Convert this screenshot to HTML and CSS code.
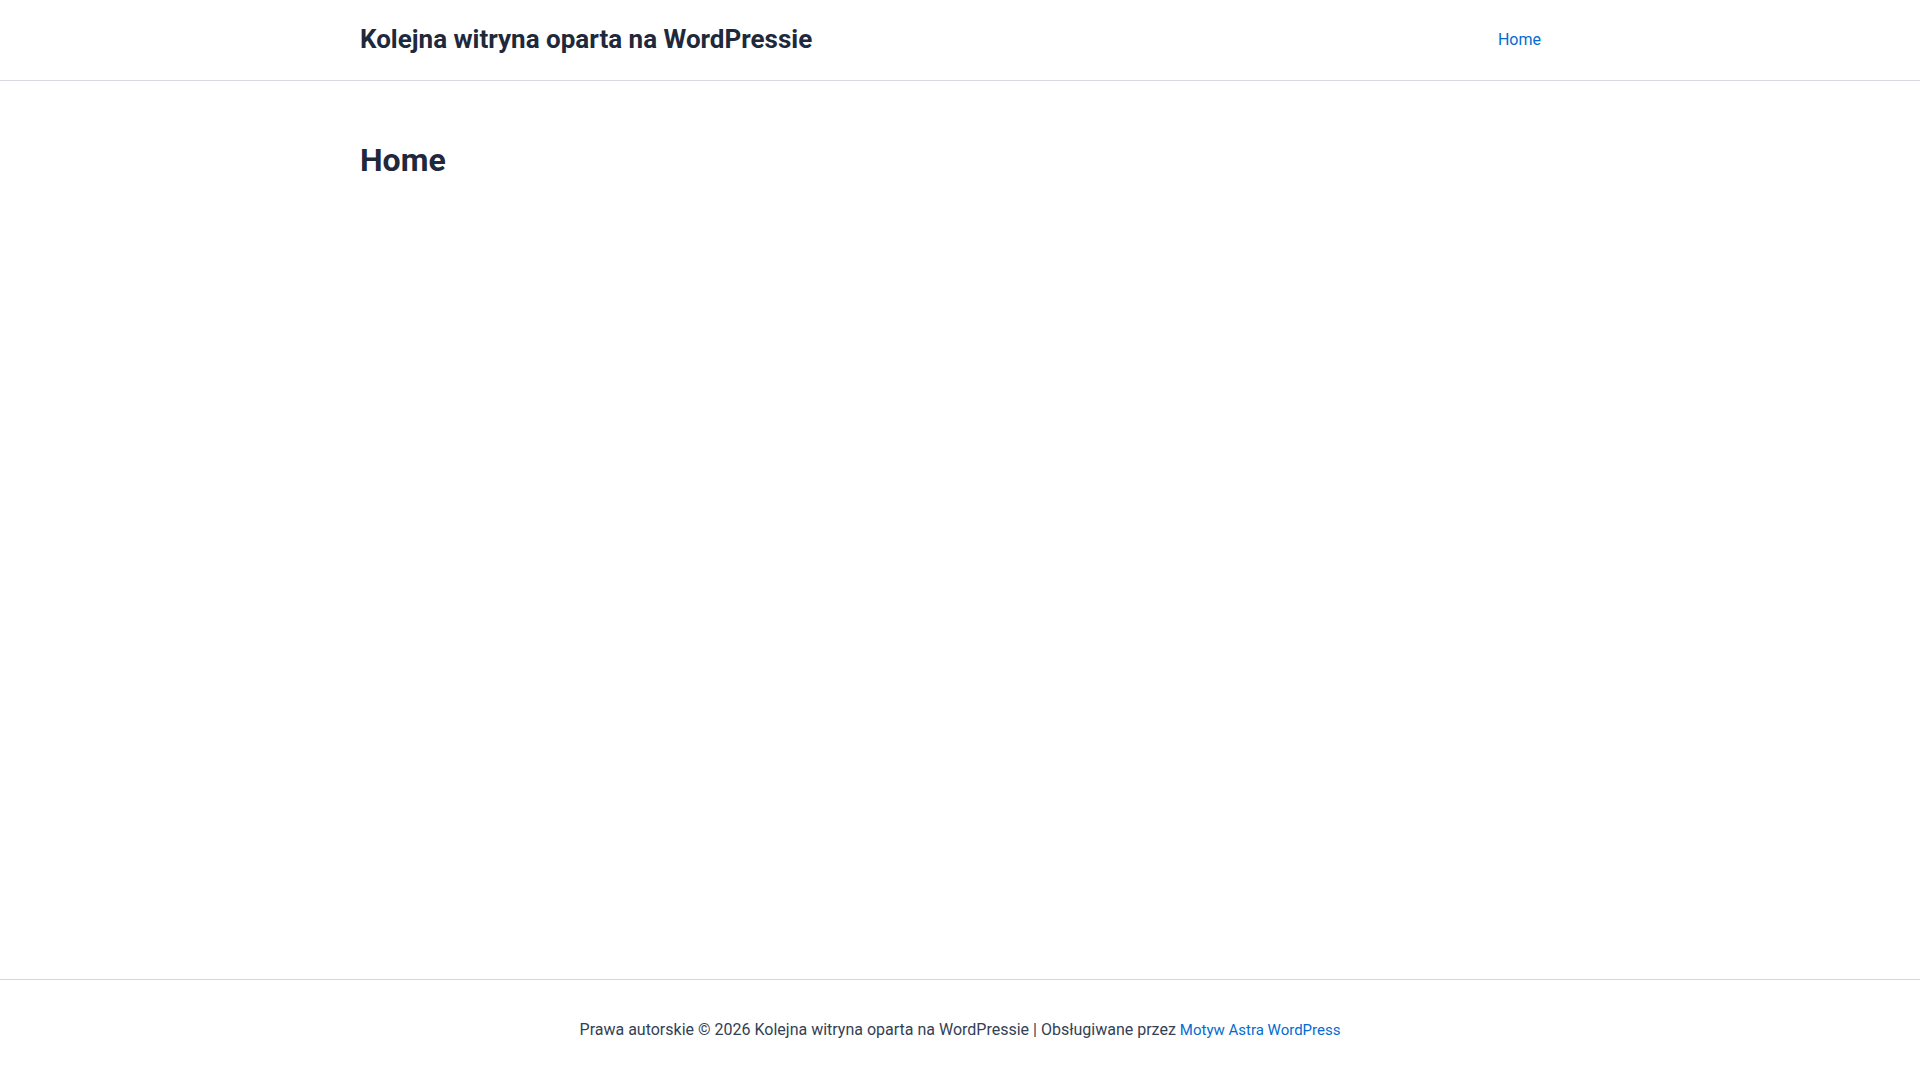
FILE: index.html
```html
<!DOCTYPE html>
<html lang="pl">
<head>
<meta charset="utf-8">
<title>Kolejna witryna oparta na WordPressie</title>
<link rel="stylesheet" href="styles.css">
</head>
<body>
<div class="page">
  <header class="site-header">
    <div class="container header-inner">
      <a class="site-title" href="#">Kolejna witryna oparta na WordPressie</a>
      <nav class="main-nav">
        <a class="nav-link" href="#">Home</a>
      </nav>
    </div>
  </header>
  <main class="site-main">
    <div class="container">
      <h1 class="entry-title">Home</h1>
    </div>
  </main>
  <footer class="site-footer">
    <div class="container footer-inner">
      <p class="copyright">Prawa autorskie © 2026 Kolejna witryna oparta na WordPressie | Obsługiwane przez <a class="footer-link" href="#">Motyw Astra WordPress</a></p>
    </div>
  </footer>
</div>
</body>
</html>
```
FILE: styles.css
```css
* { box-sizing: border-box; }
html, body { margin: 0; padding: 0; }
body {
  font-family: Roboto, "Liberation Sans", Arial, sans-serif;
  font-size: 16px;
  color: #334155;
  background: #ffffff;
}
a { text-decoration: none; }
.page {
  min-height: 100vh;
  display: flex;
  flex-direction: column;
}
.container {
  width: 100%;
  max-width: 1240px;
  margin: 0 auto;
  padding: 0 20px;
}
.site-header {
  border-bottom: 1px solid #d6d9df;
}
.header-inner {
  height: 80px;
  display: flex;
  align-items: center;
  justify-content: space-between;
}
.site-title {
  font-size: 26px;
  font-weight: 700;
  line-height: 1.2;
  color: #1e293b;
}
.main-nav {
  display: flex;
}
.nav-link {
  font-size: 16px;
  line-height: 1.2;
  color: #046bd2;
  padding: 0 19px 0 16px;
}
.site-main {
  flex: 1;
  padding-top: 60px;
}
.entry-title {
  margin: 0;
  font-size: 32px;
  font-weight: 700;
  line-height: 1.2;
  color: #1e293b;
}
.site-footer {
  border-top: 1px solid #d8d8d8;
}
.footer-inner {
  height: 100px;
  display: flex;
  align-items: center;
  justify-content: center;
}
.copyright {
  margin: 0;
  font-size: 16px;
  line-height: 1.2;
  color: #334155;
  text-align: center;
}
.footer-link {
  font-size: 15px;
  color: #046bd2;
}
```
